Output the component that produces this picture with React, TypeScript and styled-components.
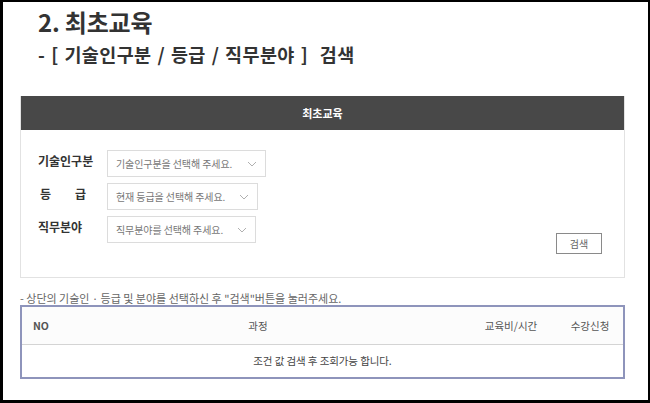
import React, { FC } from "react";
import styled, { createGlobalStyle } from "styled-components";

const GlobalStyle = createGlobalStyle`
  html, body {
    margin: 0;
    padding: 0;
    background: #fff;
  }
  body {
    font-family: "Noto Sans CJK KR", "Noto Sans", sans-serif;
    color: #333;
  }
  * {
    box-sizing: border-box;
  }
`;

const Page = styled.div`
  width: 650px;
  height: 403px;
  border: 2px solid #000;
  border-left-width: 3px;
  border-bottom-width: 3px;
  padding: 0 23px 0 17px;
  overflow: hidden;
  background: #fff;
`;

const Title = styled.h2`
  margin: 6px 0 0 18px;
  font-size: 24px;
  line-height: 28px;
  font-weight: 700;
  color: #333;
  letter-spacing: -0.2px;
`;

const SubTitle = styled.h3`
  margin: 7px 0 0 18px;
  font-size: 18.5px;
  line-height: 22px;
  font-weight: 700;
  color: #333;
  letter-spacing: 0.4px;
  word-spacing: 1.3px;
  white-space: pre;
`;

const Panel = styled.section`
  margin-top: 31px;
  border: 1px solid #e2e2e2;
  border-top: none;
`;

const PanelHeader = styled.div`
  height: 34px;
  background: #484848;
  color: #fff;
  font-size: 11px;
  font-weight: 700;
  display: flex;
  align-items: center;
  justify-content: center;
`;

const PanelBody = styled.div`
  display: flex;
  justify-content: space-between;
  align-items: flex-end;
  padding: 20px 22px 23px 17px;
`;

const Form = styled.div`
  display: grid;
  grid-template-columns: 69px auto;
  row-gap: 6px;
  align-items: center;
  padding-bottom: 11px;
`;

const Label = styled.div<{ $spread?: boolean }>`
  font-size: 12px;
  font-weight: 700;
  color: #333;
  margin-top: -6px;
  display: flex;
  justify-content: ${(props) => (props.$spread ? "space-between" : "flex-start")};
  width: ${(props) => (props.$spread ? "46px" : "auto")};
  margin-left: ${(props) => (props.$spread ? "2px" : "0")};
`;

const Select = styled.div<{ $width: number }>`
  width: ${(props) => props.$width}px;
  height: 27px;
  border: 1px solid #dcdcdc;
  background: #fff;
  display: flex;
  align-items: center;
  justify-content: space-between;
  padding: 0 8px 0 8px;
  font-size: 10px;
  color: #777;
  letter-spacing: -0.1px;
  white-space: nowrap;
`;

const Chevron = styled.svg`
  width: 10px;
  height: 6px;
  flex: none;
`;

const SearchButton = styled.button`
  width: 46px;
  height: 21px;
  border: 1px solid #8a8a8a;
  background: #fff;
  font-family: inherit;
  font-size: 10px;
  color: #666;
  padding: 0;
  cursor: pointer;
`;

const Note = styled.p`
  margin: 13px 0 0 0;
  font-size: 11px;
  line-height: 14px;
  color: #666;
  letter-spacing: 0;
  white-space: nowrap;
`;

const Table = styled.table`
  width: 605px;
  border-collapse: collapse;
  border: 2px solid #8e94bb;
  table-layout: fixed;
`;

const HeadCell = styled.th<{ $align?: string; $width?: number }>`
  height: 38px;
  background: #fcfcfc;
  border-bottom: 1px solid #d4d4d4;
  font-size: 10.5px;
  font-weight: 400;
  color: #555;
  text-align: ${(props) => props.$align || "center"};
  width: ${(props) => (props.$width ? props.$width + "px" : "auto")};
  padding: 0 0 0 ${(props) => (props.$align === "left" ? "11px" : "0")};
`;

const NoCell = styled(HeadCell)`
  font-weight: 700;
`;

const EmptyCell = styled.td`
  height: 34px;
  text-align: center;
  font-size: 10.5px;
  color: #444;
  letter-spacing: -0.1px;
`;

type FieldType = {
  label: string;
  placeholder: string;
  width: number;
  spread?: boolean;
};

const fields: FieldType[] = [
  { label: "기술인구분", placeholder: "기술인구분을 선택해 주세요.", width: 159 },
  { label: "등급", placeholder: "현재 등급을 선택해 주세요.", width: 151, spread: true },
  { label: "직무분야", placeholder: "직무분야를 선택해 주세요.", width: 149 },
];

const ChevronIcon: FC = () => (
  <Chevron viewBox="0 0 10 6">
    <path d="M1 1 L5 5 L9 1" fill="none" stroke="#b0b0b0" strokeWidth="1" />
  </Chevron>
);

export default function App() {
  return (
    <>
      <GlobalStyle />
      <Page>
        <Title>2. 최초교육</Title>
        <SubTitle>{"- [ 기술인구분 / 등급 / 직무분야 ]  검색"}</SubTitle>

        <Panel>
          <PanelHeader>최초교육</PanelHeader>
          <PanelBody>
            <Form>
              {fields.map((field) => (
                <React.Fragment key={field.label}>
                  <Label $spread={field.spread}>
                    {field.spread
                      ? field.label.split("").map((ch) => <span key={ch}>{ch}</span>)
                      : field.label}
                  </Label>
                  <Select $width={field.width}>
                    <span>{field.placeholder}</span>
                    <ChevronIcon />
                  </Select>
                </React.Fragment>
              ))}
            </Form>
            <SearchButton>검색</SearchButton>
          </PanelBody>
        </Panel>

        <Note>- 상단의 기술인 · 등급 및 분야를 선택하신 후 "검색"버튼을 눌러주세요.</Note>

        <Table>
          <thead>
            <tr>
              <NoCell $align="left" $width={30}>
                NO
              </NoCell>
              <HeadCell>과정</HeadCell>
              <HeadCell $width={92}>교육비/시간</HeadCell>
              <HeadCell $width={67}>수강신청</HeadCell>
            </tr>
          </thead>
          <tbody>
            <tr>
              <EmptyCell colSpan={4}>조건 값 검색 후 조회가능 합니다.</EmptyCell>
            </tr>
          </tbody>
        </Table>
      </Page>
    </>
  );
}
